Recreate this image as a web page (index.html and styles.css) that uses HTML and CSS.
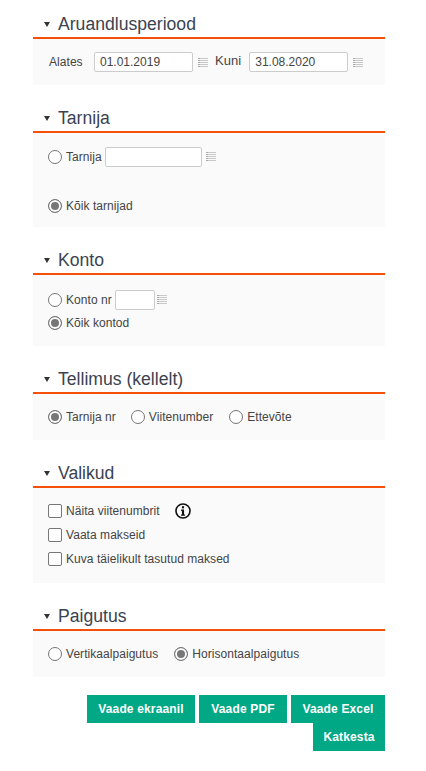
FILE: index.html
```html
<!DOCTYPE html>
<html lang="en">
  <head>
    <meta charset="UTF-8" />
    <title>Aruanne</title>
    <link rel="stylesheet" href="styles.css">
  </head>
  <body>
    <div class="report-form">
      <h3 class="section-title">Aruandlusperiood</h3>
      <div class="panel panel-period">
        <span class="lbl lbl-alates">Alates</span>
        <input class="txt txt-date" type="text" value="01.01.2019" />
        <svg class="list-icon" viewBox="0 0 10 9"><path class="dots" d="M0 .5h2M0 2.5h2M0 4.5h2M0 6.5h2M0 8.5h2" /><path d="M2 .5h8M2 2.5h8M2 4.5h8M2 6.5h8M2 8.5h8" /></svg>
        <span class="lbl lbl-kuni">Kuni</span>
        <input class="txt txt-date" type="text" value="31.08.2020" />
        <svg class="list-icon" viewBox="0 0 10 9"><path class="dots" d="M0 .5h2M0 2.5h2M0 4.5h2M0 6.5h2M0 8.5h2" /><path d="M2 .5h8M2 2.5h8M2 4.5h8M2 6.5h8M2 8.5h8" /></svg>
      </div>

      <h3 class="section-title">Tarnija</h3>
      <div class="panel panel-supplier">
        <div class="row">
          <label class="opt"><input type="radio" name="tarnija" /> Tarnija</label>
          <input class="txt txt-supplier" type="text" />
          <svg class="list-icon icon-supplier" viewBox="0 0 10 9"><path class="dots" d="M0 .5h2M0 2.5h2M0 4.5h2M0 6.5h2M0 8.5h2" /><path d="M2 .5h8M2 2.5h8M2 4.5h8M2 6.5h8M2 8.5h8" /></svg>
        </div>
        <div class="row row-all">
          <label class="opt"><input type="radio" name="tarnija" checked /> Kõik tarnijad</label>
        </div>
      </div>

      <h3 class="section-title">Konto</h3>
      <div class="panel panel-account">
        <div class="row">
          <label class="opt"><input type="radio" name="konto" /> Konto nr</label>
          <input class="txt txt-account" type="text" />
          <svg class="list-icon icon-account" viewBox="0 0 10 9"><path class="dots" d="M0 .5h2M0 2.5h2M0 4.5h2M0 6.5h2M0 8.5h2" /><path d="M2 .5h8M2 2.5h8M2 4.5h8M2 6.5h8M2 8.5h8" /></svg>
        </div>
        <div class="row">
          <label class="opt"><input type="radio" name="konto" checked /> Kõik kontod</label>
        </div>
      </div>

      <h3 class="section-title">Tellimus (kellelt)</h3>
      <div class="panel panel-order">
        <label class="opt"><input type="radio" name="tellimus" checked /> Tarnija nr</label>
        <label class="opt"><input type="radio" name="tellimus" /> Viitenumber</label>
        <label class="opt"><input type="radio" name="tellimus" /> Ettevõte</label>
      </div>

      <h3 class="section-title">Valikud</h3>
      <div class="panel panel-choices">
        <div class="row">
          <label class="opt"><input type="checkbox" /> Näita viitenumbrit</label>
          <svg class="info-icon" viewBox="0 0 18 18">
            <circle cx="9" cy="9" r="7.9" />
            <rect x="7.8" y="3.6" width="2.4" height="2.4" />
            <path d="M6.9 7.4h3.3v5.4h1.1v1.5H6.8v-1.5h1V8.9h-.9z" />
          </svg>
        </div>
        <div class="row"><label class="opt"><input type="checkbox" /> Vaata makseid</label></div>
        <div class="row"><label class="opt"><input type="checkbox" /> Kuva täielikult tasutud maksed</label></div>
      </div>

      <h3 class="section-title">Paigutus</h3>
      <div class="panel panel-layout">
        <label class="opt"><input type="radio" name="paigutus" /> Vertikaalpaigutus</label>
        <label class="opt"><input type="radio" name="paigutus" checked /> Horisontaalpaigutus</label>
      </div>

      <div class="buttons">
        <button class="btn btn-screen">Vaade ekraanil</button>
        <button class="btn btn-pdf">Vaade PDF</button>
        <button class="btn btn-excel">Vaade Excel</button>
        <button class="btn btn-cancel">Katkesta</button>
      </div>
    </div>
  </body>
</html>
```

FILE: styles.css
```css
body {
  margin: 0;
  background-color: #fff;
  font-family: "Liberation Sans", Arial, sans-serif;
  font-size: 12px;
  letter-spacing: 0.05px;
  color: #444;
}
.report-form {
  width: 352px;
  margin-left: 33px;
  padding-top: 15px;
}
.section-title {
  position: relative;
  margin: 0;
  padding-left: 25px;
  height: 22px;
  line-height: 19px;
  font-size: 17.6px;
  font-weight: normal;
  letter-spacing: 0;
  color: #3b4351;
  border-bottom: 2px solid #f4500a;
}
.section-title::before {
  content: "";
  position: absolute;
  left: 11px;
  top: 7px;
  border-left: 3.5px solid transparent;
  border-right: 3.5px solid transparent;
  border-top: 5px solid #333;
}
.panel {
  background-color: #fafafa;
  padding-left: 15px;
  margin-bottom: 24px;
  box-sizing: border-box;
}
.panel-period {
  display: flex;
  align-items: center;
  height: 46px;
}
.panel-supplier { height: 94px; padding-top: 12px; }
.panel-account { height: 71px; padding-top: 13px; }
.panel-order {
  display: flex;
  align-items: center;
  gap: 15px;
  height: 46px;
}
.panel-order .opt:last-child { margin-left: 1px; }
.panel-choices { height: 95px; padding-top: 11px; }
.panel-choices .row { height: 24px; }
.panel-layout {
  display: flex;
  align-items: center;
  gap: 16px;
  height: 46px;
  margin-bottom: 18px;
}
.row {
  display: flex;
  align-items: center;
  height: 23px;
}
.row-all { margin-top: 26px; }
.lbl { font-size: 12px; }
.lbl-alates { width: 45px; margin-left: 1px; }
.lbl-kuni { margin: -3px 8px 0 7px; font-size: 13px; }
.opt {
  display: flex;
  align-items: center;
  gap: 4px;
}
.txt {
  box-sizing: border-box;
  height: 20px;
  padding: 0 5px;
  border: 1px solid #ccc;
  border-radius: 2px;
  background-color: #fff;
  font-family: "Liberation Sans", Arial, sans-serif;
  font-size: 12px;
  letter-spacing: 0;
  color: #444;
}
.txt-date { width: 99px; }
.txt-supplier { width: 97px; margin-left: 3px; }
.txt-account { width: 40px; margin-left: 3px; }
.list-icon {
  width: 10px;
  height: 9px;
  margin-left: 5px;
  stroke: #c8c8c8;
  stroke-width: 1;
}
.list-icon .dots { stroke: #a8a8a8; }
.icon-supplier { margin-left: 4px; }
.icon-account { margin-left: 2px; }
.info-icon {
  width: 16px;
  height: 16px;
  margin-left: 15px;
}
.info-icon circle {
  fill: none;
  stroke: #111;
  stroke-width: 1.8;
}
.info-icon rect, .info-icon path { fill: #111; }
input[type=radio], input[type=checkbox] {
  appearance: none;
  box-sizing: border-box;
  width: 14px;
  height: 14px;
  margin: 0;
  border: 1px solid #767676;
  background-color: #fff;
}
input[type=radio] { border-radius: 50%; }
input[type=checkbox] { border-radius: 2px; }
input[type=radio]:checked {
  background-color: #777;
  box-shadow: inset 0 0 0 2px #fff;
}
.buttons {
  display: flex;
  flex-wrap: wrap;
  justify-content: flex-end;
  gap: 0 4px;
}
.btn {
  height: 28px;
  padding: 0;
  border: none;
  background-color: #00a886;
  color: #fff;
  font-family: "Liberation Sans", Arial, sans-serif;
  font-size: 12px;
  font-weight: bold;
  letter-spacing: 0.15px;
}
.btn-screen { width: 108px; }
.btn-pdf { width: 88px; }
.btn-excel { width: 94px; }
.btn-cancel { width: 72px; }
```
